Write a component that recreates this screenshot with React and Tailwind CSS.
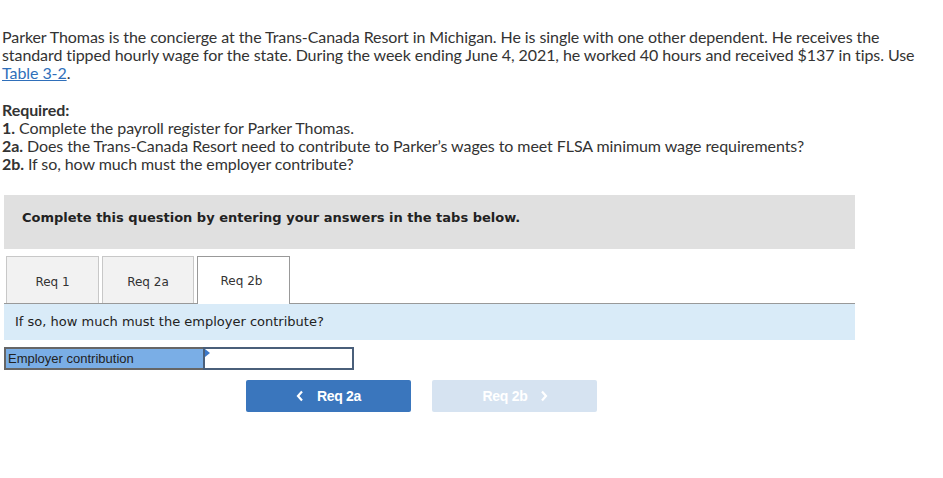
import React from "react";

export default function App() {
  return (
    <div className="w-[943px] h-[478px] bg-white relative overflow-hidden">
      <div className="pt-[28px] pl-[2px] w-[940px] text-[16px] leading-[18px] text-[#333] font-['Lato',sans-serif] tracking-[-0.08px]">
        <p>
          Parker Thomas is the concierge at the Trans-Canada Resort in Michigan. He is single with one other dependent. He receives the standard tipped hourly wage for the state. During the week ending June 4, 2021, he worked 40 hours and received $137 in tips. Use{" "}
          <span className="text-[#2f6fba] underline">Table 3-2</span>.
        </p>
        <div className="mt-[19px]">
          <p className="font-bold">Required:</p>
          <p><span className="font-bold">1.</span> Complete the payroll register for Parker Thomas.</p>
          <p><span className="font-bold">2a.</span> Does the Trans-Canada Resort need to contribute to Parker’s wages to meet FLSA minimum wage requirements?</p>
          <p><span className="font-bold">2b.</span> If so, how much must the employer contribute?</p>
        </div>
      </div>

      <div className="ml-[4px] w-[851px] mt-[22px]">
        <div className="h-[54px] bg-[#e0e0e0] flex items-center pl-[18px] pb-[8px] font-['DejaVu_Sans',Verdana,sans-serif] font-bold text-[13px] text-[#222]">
          Complete this question by entering your answers in the tabs below.
        </div>
        <div className="mt-[7px] flex items-end gap-[3px] pl-[2px] border-b border-[#999] h-[48px] font-['DejaVu_Sans',Verdana,sans-serif] text-[12px] text-[#333]">
          <div className="w-[93px] h-[47px] bg-[#f2f2f2] border border-b-0 border-[#c8c8c8] flex items-center justify-center pt-[3px]">Req 1</div>
          <div className="w-[92px] h-[47px] bg-[#f2f2f2] border border-b-0 border-[#c8c8c8] flex items-center justify-center pt-[3px]">Req 2a</div>
          <div className="w-[93px] h-[48px] bg-white border border-b-0 border-[#999] flex items-center justify-center mb-[-1px] pr-[4px] relative">Req 2b</div>
        </div>
        <div className="h-[36px] bg-[#d9ebf8] flex items-center pl-[11px] font-['DejaVu_Sans',Verdana,sans-serif] text-[13px] text-[#222]">
          If so, how much must the employer contribute?
        </div>
        <div className="mt-[7px] flex h-[23px] font-['Liberation_Sans',Arial,sans-serif] text-[13px] text-[#222]">
          <div className="w-[199px] bg-[#7aaee6] border-2 border-r-0 border-[#666] flex items-center pl-[2px]">Employer contribution</div>
          <div className="w-[151px] bg-white border-2 border-[#4a5f7a] relative">
            <span className="absolute left-0 top-0 w-0 h-0 border-t-[4px] border-b-[4px] border-l-[5px] border-t-transparent border-b-transparent border-l-[#3c78c8]"></span>
          </div>
        </div>
        <div className="mt-[10px] flex gap-[21px] pl-[242px] font-['Liberation_Sans',Arial,sans-serif] font-bold text-[14px] text-white">
          <div className="w-[165px] h-[32px] rounded-[2px] bg-[#3a76bd] flex items-center justify-center gap-[13px]">
            <svg width="8" height="12" viewBox="0 0 8 12"><path d="M6 1.5 L2 6 L6 10.5" stroke="white" strokeWidth="2.2" fill="none" /></svg>
            <span className="tracking-[-0.3px]">Req 2a</span>
          </div>
          <div className="w-[165px] h-[32px] rounded-[2px] bg-[#d6e3f1] flex items-center justify-center gap-[13px] pl-[2px]">
            <span className="tracking-[-0.3px]">Req 2b</span>
            <svg width="8" height="12" viewBox="0 0 8 12"><path d="M2 1.5 L6 6 L2 10.5" stroke="white" strokeWidth="2.2" fill="none" /></svg>
          </div>
        </div>
      </div>
    </div>
  );
}
